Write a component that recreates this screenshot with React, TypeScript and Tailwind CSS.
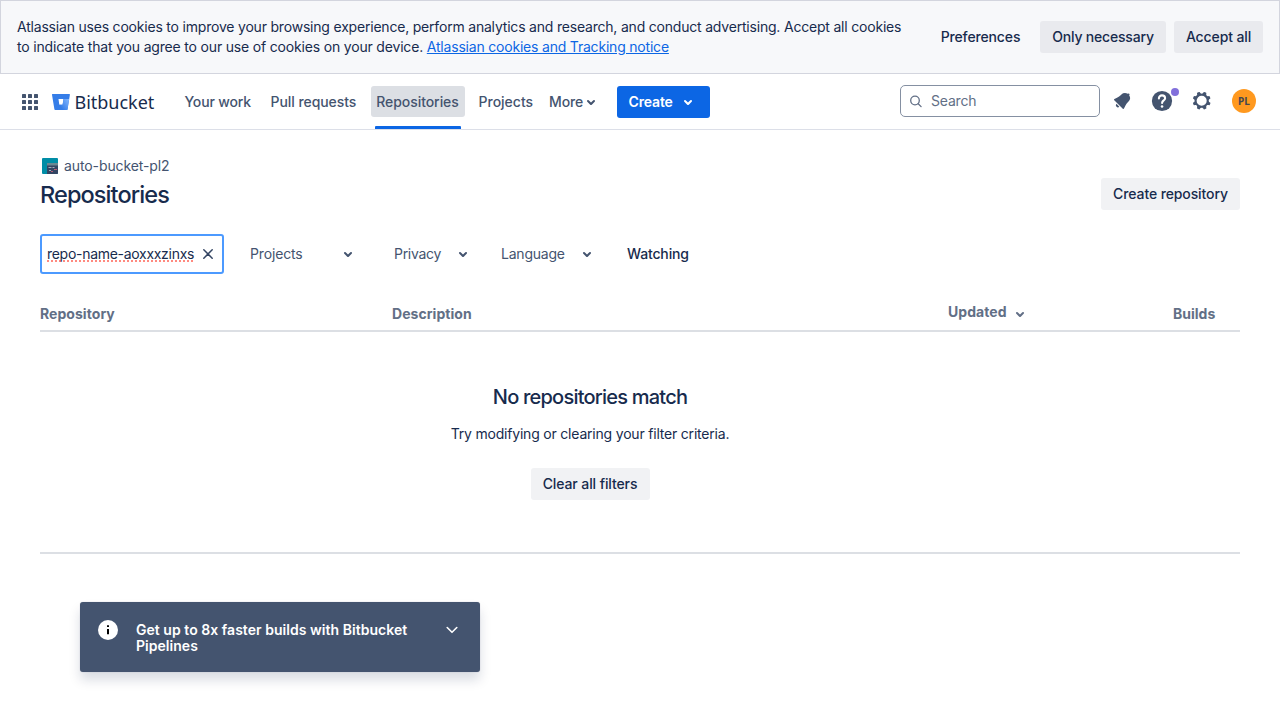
import type { ReactNode } from "react";

function Chevron({ className = "" }: { className?: string }) {
  return (
    <svg viewBox="0 0 24 24" className={`shrink-0 ${className}`} fill="currentColor" aria-hidden="true">
      <path d="M8.292 10.293a1.009 1.009 0 000 1.419l2.939 2.965c.218.215.5.322.779.322s.556-.107.769-.322l2.93-2.955a1.01 1.01 0 000-1.419.987.987 0 00-1.406 0l-2.298 2.317-2.307-2.327a.99.99 0 00-1.406 0z" />
    </svg>
  );
}

function CookieBanner() {
  return (
    <section className="flex h-[74px] justify-between border border-[#d3d5de] bg-[#f7f8fa] pl-4 pr-4">
      <p className="w-[900px] pt-4 text-sm/5 whitespace-nowrap">
        <span className="tracking-[-0.2px]">
          Atlassian uses cookies to improve your browsing experience, perform analytics and research, and conduct advertising. Accept all cookies
        </span>
        <br />
        <span className="tracking-[-0.178px]">to indicate that you agree to our use of cookies on your device. </span>
        <a className="tracking-[-0.2px] text-[#0c66e4] underline">Atlassian cookies and Tracking notice</a>
      </p>
      <div className="mt-5 flex h-8 gap-2 text-sm font-medium whitespace-nowrap">
        <button className="w-[104px] pl-px tracking-[-0.14px]">Preferences</button>
        <button className="w-[126px] rounded-[3px] bg-[#e9eaee] tracking-[-0.19px]">Only necessary</button>
        <button className="w-[89px] rounded-[3px] bg-[#e9eaee] tracking-[-0.12px]">Accept all</button>
      </div>
    </section>
  );
}

function Logo() {
  return (
    <div className="flex w-[132.5px] items-center">
      <svg viewBox="0 0 18 16" className="mr-[4.5px] h-4 w-[18px]" aria-hidden="true">
        <defs>
          <linearGradient id="bucket" x1="17" y1="5" x2="8" y2="12" gradientUnits="userSpaceOnUse">
            <stop offset="0" stopColor="#85b8ff" />
            <stop offset="1" stopColor="#357de8" />
          </linearGradient>
        </defs>
        <path d="M.6 0A.6.6 0 0 0 0 .7l2.4 14.6a.8.8 0 0 0 .8.7h11.7a.6.6 0 0 0 .6-.5L17.9.7a.6.6 0 0 0-.6-.7zM6.5 5h5l-.9 5.7H7.3z" fill="#357de8" fillRule="evenodd" />
        <path d="M17.1 5h-5.6l-.9 5.7H7.3l-4.2 5.1.7.2h11.1a.6.6 0 0 0 .6-.5z" fill="url(#bucket)" />
      </svg>
      <span className="font-['Noto_Sans',sans-serif] text-[18px]/6 tracking-[-0.02px] text-[#172b4d]">Bitbucket</span>
    </div>
  );
}

function NavLink({ className, children }: { className: string; children: ReactNode }) {
  return <a className={`flex items-center whitespace-nowrap ${className}`}>{children}</a>;
}

function TopNav() {
  return (
    <header className="flex h-14 items-center border-b border-[#dcdfe8] pl-[22px] pr-6 text-[#44546f]">
      <svg viewBox="0 0 16 16" className="mr-[14px] size-4" fill="currentColor" aria-hidden="true">
        {[0, 6, 12].map((y) => [0, 6, 12].map((x) => <rect key={`${x}-${y}`} x={x} y={y} width="4" height="4" rx=".6" />))}
      </svg>
      <Logo />
      <nav className="flex h-full items-center text-sm font-medium">
        <NavLink className="w-[86px] tracking-[-0.17px]">Your work</NavLink>
        <NavLink className="w-[99.5px] tracking-[-0.06px]">Pull requests</NavLink>
        <div className="flex h-full w-[95px] flex-col items-center pt-3">
          <a className="flex h-8 w-[94px] items-center justify-center rounded-[3px] bg-[#dcdfe4] tracking-[-0.06px]">Repositories</a>
          <span className="mt-[9px] h-[3px] w-[86px] rounded-t-[1px] bg-[#0c66e4]" />
        </div>
        <NavLink className="w-[71px] pl-[13.5px] tracking-[0px]">Projects</NavLink>
        <NavLink className="w-[80.5px] pl-[13px] tracking-[-0.1px]">
          More
          <Chevron className="-mr-4 -ml-1 size-6" />
        </NavLink>
        <button className="flex h-8 w-[93px] items-center rounded-[3px] bg-[#0c66e4] pl-3 font-semibold tracking-[-0.16px] text-white">
          Create
          <Chevron className="ml-[3px] size-6" />
        </button>
      </nav>
      <div className="ml-auto flex items-center pb-px">
        <div className="flex h-8 w-[200px] items-center rounded-[5px] border border-[#8590a2] pl-2 text-sm tracking-[-0.2px] text-[#626f86]">
          <svg viewBox="0 0 14 14" className="mr-2 size-[14px]" fill="none" stroke="currentColor" strokeWidth="1.3" strokeLinecap="round" aria-hidden="true">
            <circle cx="6" cy="6.5" r="4.3" />
            <path d="m9.2 9.7 2.9 2.9" />
          </svg>
          Search
        </div>
        <svg viewBox="0 0 24 24" className="ml-[10px] size-6" fill="currentColor" aria-hidden="true">
          <path d="M6.485 17.669a2 2 0 002.829 0l-2.829-2.83a2 2 0 000 2.83zm4.897-12.191l-.725.725c-.782.782-2.21 1.813-3.206 2.311l-3.017 1.509c-.495.248-.584.774-.187 1.171l8.556 8.556c.398.396.922.313 1.171-.188l1.51-3.016c.494-.988 1.526-2.42 2.311-3.206l.725-.726a5.048 5.048 0 00.64-6.356 1.01 1.01 0 10-1.354-1.494c-.023.025-.046.049-.066.075a5.043 5.043 0 00-2.788-.84 5.036 5.036 0 00-3.57 1.478z" />
        </svg>
        <div className="relative ml-4 size-6">
          <svg viewBox="0 0 24 24" className="size-6" aria-hidden="true">
            <circle cx="12" cy="12" r="10.1" fill="currentColor" />
            <path d="M8.9 9.5C8.9 7.6 10.2 6.4 12 6.4s3.1 1.2 3.1 2.8c0 2.3-3 2.2-3 4.8" fill="none" stroke="#fff" strokeWidth="2.1" strokeLinecap="round" />
            <circle cx="12.05" cy="17.5" r="1.3" fill="#fff" />
          </svg>
          <span className="absolute top-[-1px] left-[21px] size-2 rounded-full bg-[#8270db]" />
        </div>
        <svg viewBox="0 0 24 24" className="ml-4 size-6" fill="currentColor" fillRule="evenodd" aria-hidden="true">
          <path d="M11.701 16.7a5.002 5.002 0 110-10.003 5.002 5.002 0 010 10.004m8.368-3.117a1.995 1.995 0 01-1.346-1.885c0-.876.563-1.613 1.345-1.885a.48.48 0 00.315-.574 8.947 8.947 0 00-.836-1.993.477.477 0 00-.598-.195 2.04 2.04 0 01-1.29.08 1.988 1.988 0 01-1.404-1.395 2.04 2.04 0 01.076-1.297.478.478 0 00-.196-.597 8.98 8.98 0 00-1.975-.826.479.479 0 00-.574.314 1.995 1.995 0 01-1.885 1.346 1.994 1.994 0 01-1.884-1.345.482.482 0 00-.575-.315c-.708.2-1.379.485-2.004.842a.47.47 0 00-.198.582A2.002 2.002 0 014.445 7.06a.478.478 0 00-.595.196 8.946 8.946 0 00-.833 1.994.48.48 0 00.308.572 1.995 1.995 0 011.323 1.877c0 .867-.552 1.599-1.324 1.877a.479.479 0 00-.308.57 8.99 8.99 0 00.723 1.79.477.477 0 00.624.194c.595-.273 1.343-.264 2.104.238.117.077.225.185.302.3.527.8.512 1.58.198 2.188a.473.473 0 00.168.628 8.946 8.946 0 002.11.897.474.474 0 00.57-.313 1.995 1.995 0 011.886-1.353c.878 0 1.618.567 1.887 1.353a.475.475 0 00.57.313 8.964 8.964 0 002.084-.883.473.473 0 00.167-.631c-.318-.608-.337-1.393.191-2.195.077-.116.185-.225.302-.302.772-.511 1.527-.513 2.125-.23a.477.477 0 00.628-.19 8.925 8.925 0 00.728-1.793.478.478 0 00-.314-.573" />
        </svg>
        <span className="ml-[18px] flex size-6 items-center justify-center rounded-full bg-[#ff991f] font-['Noto_Sans',sans-serif] text-[10px] font-bold tracking-[0.2px] text-[#44474f]">PL</span>
      </div>
    </header>
  );
}

function Filter({ label, className }: { label: string; className: string }) {
  return (
    <div className={`flex items-center justify-between text-[#44546f] ${className}`}>
      {label}
      <Chevron className="size-6" />
    </div>
  );
}

function Filters() {
  return (
    <div className="mt-6 flex h-10 items-center text-sm">
      <div className="flex h-10 w-[184px] items-center rounded-[3px] border-2 border-[#4c9aff] pl-[5px]">
        <span className="w-[147px] bg-[linear-gradient(to_right,#ff8a80_2px,transparent_2px)] bg-[length:4px_2px] bg-[position:0_100%] bg-repeat-x leading-4 tracking-[-0.29px] whitespace-nowrap">repo-name-aoxxxzinxs</span>
        <svg viewBox="0 0 10 10" className="ml-[9px] size-[10px]" stroke="#344563" strokeWidth="1.5" strokeLinecap="round" aria-hidden="true">
          <path d="m.8.8 8.4 8.4M9.2.8.8 9.2" />
        </svg>
      </div>
      <Filter label="Projects" className="ml-[26px] w-[110px] tracking-[-0.15px]" />
      <Filter label="Privacy" className="ml-[34px] w-[81px] tracking-[-0.3px]" />
      <Filter label="Language" className="ml-[26px] w-[97.5px] tracking-[-0.22px]" />
      <button className="ml-[28.5px] font-medium tracking-[-0.15px]">Watching</button>
    </div>
  );
}

function TableHead() {
  return (
    <div className="mt-[30px] flex h-7 border-b-2 border-[#dcdfe4] text-sm/5 font-bold tracking-[0.05px] text-[#626f86]">
      <span className="w-[352px]">Repository</span>
      <span className="w-[556px]">Description</span>
      <span className="-mt-[2px] flex w-[225px]">
        <span className="w-[59.5px]">Updated</span>
        <Chevron className="size-6" />
      </span>
      <span className="tracking-normal">Builds</span>
    </div>
  );
}

function EmptyState() {
  return (
    <div className="flex h-[222px] w-full flex-col items-center border-b-2 border-[#dcdfe4] pr-[100px] pt-[53px]">
      <h2 className="text-xl/6 font-medium tracking-[-0.78px]">No repositories match</h2>
      <p className="mt-[15px] text-sm/5 tracking-[-0.2px]">Try modifying or clearing your filter criteria.</p>
      <button className="mt-6 h-8 w-[119px] rounded-[3px] bg-[#f1f2f4] text-sm font-medium tracking-[-0.1px] whitespace-nowrap">Clear all filters</button>
    </div>
  );
}

function PipelinesFlag() {
  return (
    <aside className="mt-12 ml-20 flex h-[70px] w-[400px] rounded-[3px] bg-[#44546f] pt-4 pl-4 text-white shadow-[0_8px_12px_rgba(9,30,66,0.15),0_0_1px_rgba(9,30,66,0.31)]">
      <svg viewBox="0 0 24 24" className="size-6" aria-hidden="true">
        <circle cx="12" cy="12" r="10" fill="#fff" />
        <path d="M11 11h2v5.3h-2zM11 7.2h2v1.9h-2z" fill="#000" />
      </svg>
      <p className="ml-4 w-[304px] pt-1 text-sm/4 font-semibold tracking-[0.035px]">
        Get up to 8x faster builds with Bitbucket
        <br />
        Pipelines
      </p>
      <svg viewBox="0 0 24 24" className="size-6" fill="none" stroke="currentColor" strokeWidth="1.6" strokeLinecap="round" strokeLinejoin="round" aria-hidden="true">
        <path d="m7.2 9.5 4.8 4.8 4.8-4.8" />
      </svg>
    </aside>
  );
}

export default function App() {
  return (
    <div className="h-[720px] w-[1280px] overflow-hidden bg-white font-['Inter',sans-serif] text-[#172b4d]">
      <CookieBanner />
      <TopNav />
      <main className="px-10 pt-6">
        <div className="flex h-[56px] justify-between">
          <div>
            <div className="flex h-6 items-center pl-[2px] text-sm tracking-[-0.1px] text-[#44546f]">
              <svg viewBox="0 0 16 16" className="mr-[6px] size-4" aria-hidden="true">
                <rect width="16" height="16" rx="1" fill="#008da6" />
                <path d="M5 5h11v10a1 1 0 0 1-1 1H5z" fill="#344563" />
                <path d="M5 5h11v2.5H5z" fill="#6b8792" />
                <path d="M6.5 9h3v1h-3zM10.5 9h2v1h-2zM7 12h2v1H7z" fill="#a5adba" />
                <path d="M12 11h3v1h-3zM9 13h2v1H9z" fill="#b65c74" />
              </svg>
              auto-bucket-pl2
            </div>
            <h1 className="mt-[3px] text-[23.5px]/7 font-medium tracking-[-0.9px]">Repositories</h1>
          </div>
          <button className="mt-6 h-8 w-[139px] rounded-[3px] bg-[#f1f2f4] text-sm font-medium tracking-[-0.11px] whitespace-nowrap">Create repository</button>
        </div>
        <Filters />
        <TableHead />
        <EmptyState />
      </main>
      <PipelinesFlag />
    </div>
  );
}
